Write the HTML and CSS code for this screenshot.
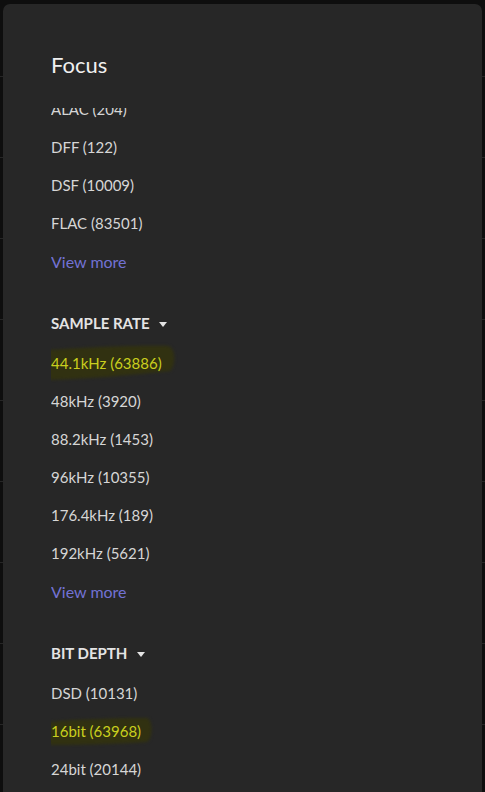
FILE: index.html
```html
<!DOCTYPE html>
<html lang="en">
<head>
    <meta charset="UTF-8">
    <meta name="viewport" content="width=device-width, initial-scale=1.0">
    <title>Focus</title>
    <link rel="stylesheet" href="styles.css">
</head>
<body>
    <!-- page behind the drawer -->
    <div class="page">
        <div class="page-row first"></div>
        <div class="page-row"></div>
        <div class="page-row"></div>
        <div class="page-row"></div>
        <div class="page-row"></div>
        <div class="page-row"></div>
        <div class="page-row"></div>
        <div class="page-row"></div>
        <div class="page-row"></div>
        <div class="page-row"></div>
    </div>

    <div class="drawer">
        <h2 class="drawer-title">Focus</h2>
        <div class="drawer-scroll">
            <div class="drawer-list">
                <div class="section">
                    <div class="item">ALAC (204)</div>
                    <div class="item">DFF (122)</div>
                    <div class="item">DSF (10009)</div>
                    <div class="item">FLAC (83501)</div>
                    <div class="view-more">View more</div>
                </div>

                <div class="section">
                    <div class="section-head">SAMPLE RATE <span class="caret"></span></div>
                    <div class="item marked">
                        <svg class="mark mark-wide" viewBox="0 0 145 36" preserveAspectRatio="none">
                            <path d="M8 6 C 40 3, 110 0, 138 1 C 146 3, 146 20, 140 26 C 100 30, 50 35, 8 35 C 0 32, 0 12, 8 6 Z"/>
                        </svg>
                        <span class="label">44.1kHz (63886)</span>
                    </div>
                    <div class="item">48kHz (3920)</div>
                    <div class="item">88.2kHz (1453)</div>
                    <div class="item">96kHz (10355)</div>
                    <div class="item">176.4kHz (189)</div>
                    <div class="item">192kHz (5621)</div>
                    <div class="view-more">View more</div>
                </div>

                <div class="section">
                    <div class="section-head">BIT DEPTH <span class="caret"></span></div>
                    <div class="item">DSD (10131)</div>
                    <div class="item marked">
                        <svg class="mark mark-short" viewBox="0 0 108 30" preserveAspectRatio="none">
                            <path d="M6 6 C 30 3, 80 2, 102 2 C 108 4, 108 22, 102 26 C 80 28, 30 29, 6 29 C 0 26, 0 10, 6 6 Z"/>
                        </svg>
                        <span class="label">16bit (63968)</span>
                    </div>
                    <div class="item">24bit (20144)</div>
                </div>
            </div>
        </div>
    </div>
</body>
</html>
```

FILE: styles.css
```css
body {
    margin: 0;
    background: #0e0e0e;
    font-family: Lato, "Liberation Sans", sans-serif;
    height: 792px;
    overflow: hidden;
    position: relative;
}

/* rows of the page under the drawer */
.page-row {
    height: 80px;
    border-bottom: 1px solid #262626;
}
.page-row.first {
    height: 76px;
}

/* the drawer lies over the page */
.drawer {
    position: absolute;
    top: 4px;
    left: 3px;
    width: 479px;
    height: 800px;
    background: #272727;
    border-radius: 7px;
    padding-left: 48px;
    box-sizing: border-box;
}
.drawer-title {
    margin: 46px 0 28px;
    font-size: 22px;
    font-weight: normal;
    line-height: 30px;
    color: #f0f0f0;
}
.drawer-scroll {
    height: 700px;
    overflow: hidden;
}
.drawer-list {
    margin-top: -18px;
}

.item {
    position: relative;
    height: 38px;
    line-height: 38px;
    font-size: 15px;
    color: #d6d6d6;
}
.view-more {
    margin-top: 1px;
    height: 38px;
    line-height: 38px;
    font-size: 16px;
    color: #7272d4;
}
.section-head {
    margin: 23px 0 2px;
    height: 38px;
    line-height: 38px;
    font-size: 15px;
    font-weight: bold;
    color: #e4e4e4;
}
.caret {
    display: inline-block;
    margin-left: 6px;
    vertical-align: 2px;
    border-left: 4.5px solid transparent;
    border-right: 4.5px solid transparent;
    border-top: 5px solid #e4e4e4;
}

/* highlighter smears */
.marked .label {
    position: relative;
    color: #c9cf1e;
}
.mark {
    position: absolute;
    filter: blur(1.5px);
}
.mark path {
    fill: #313111;
}
.mark-wide {
    left: -21px;
    top: 1px;
    width: 145px;
    height: 36px;
}
.mark-short {
    left: -6px;
    top: 4px;
    width: 108px;
    height: 30px;
}
```
